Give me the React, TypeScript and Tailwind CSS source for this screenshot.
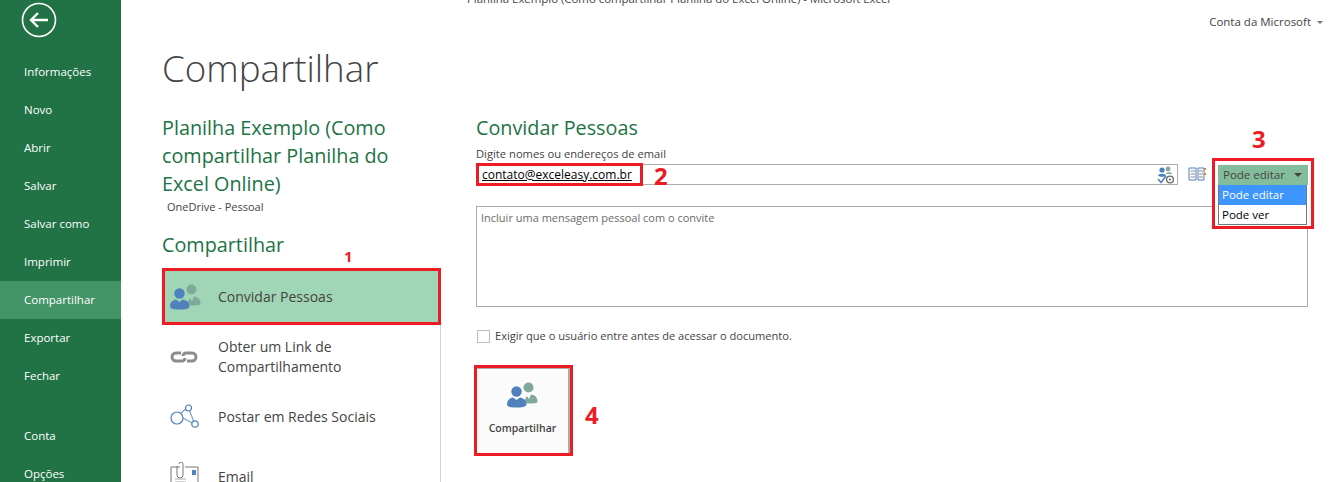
const font = { fontFamily: '"Open Sans", "Noto Sans", sans-serif' };

const navTop = [
  { id: "info", name: "Informações" },
  { id: "new", name: "Novo" },
  { id: "open", name: "Abrir" },
  { id: "save", name: "Salvar" },
  { id: "saveas", name: "Salvar como" },
  { id: "print", name: "Imprimir" },
  { id: "share", name: "Compartilhar", active: true },
  { id: "export", name: "Exportar" },
  { id: "close", name: "Fechar" },
];

const PeopleIcon = ({ className }: { className?: string }) => (
  <svg viewBox="0 0 31 26" className={className}>
    <circle cx="21.5" cy="5.5" r="5" fill="#7fa99b" />
    <path d="M16 21 L20 14 L22 17 L24 12.5 C28 13 30.5 15 30.5 20 C30.5 21 26 21.5 22 21.5 Z" fill="#7fa99b" />
    <circle cx="9.5" cy="9.5" r="5.2" fill="#4f81bd" />
    <path d="M0 22.5 C0 18 3 16 6 15.5 L9.5 18 L13 15.5 C16 16 19.5 18 19.5 22.5 C19.5 25 14 25.5 9.5 25.5 C5 25.5 0 25 0 22.5 Z" fill="#4f81bd" />
  </svg>
);

const Sidebar = () => (
  <aside className="flex h-[482px] w-[121px] shrink-0 flex-col bg-[#217346] text-white">
    <div className="pl-[21px] pt-[2px]">
      <svg viewBox="0 0 36 36" className="size-[36px]">
        <circle cx="18" cy="18" r="16.5" fill="none" stroke="#fff" strokeWidth="1.6" />
        <path d="M10 18 H27 M17 11 L10 18 L17 25" fill="none" stroke="#fff" strokeWidth="2.4" />
      </svg>
    </div>
    <nav className="mt-[15px] flex flex-col text-[11.5px]">
      {navTop.map((item) => (
        <div key={item.id} className={`flex h-[38px] items-center pl-[24px] ${item.active ? "bg-[#439467]" : ""}`}>
          {item.name}
        </div>
      ))}
    </nav>
    <div className="ml-[24px] mr-[26px] mt-[11px] h-px bg-[#4d9a70]" />
    <div className="mt-[11px] flex flex-col text-[11.5px]">
      <div className="flex h-[38px] items-center pl-[24px]">Conta</div>
      <div className="flex h-[38px] items-center pl-[24px]">Opções</div>
    </div>
  </aside>
);

const ShareOption = ({ icon, children, active, className }: { icon: React.ReactNode; children: React.ReactNode; active?: boolean; className?: string }) => (
  <div className={`flex items-center text-[14px] leading-[20px] text-[#444] ${active ? "bg-[#a0d5b5]" : ""} ${className ?? ""}`}>
    <div className="flex w-[56px] shrink-0 justify-start pl-[8px]">{icon}</div>
    <div>{children}</div>
  </div>
);

const LeftColumn = () => (
  <div className="flex w-[279px] shrink-0 flex-col">
    <h2 className="w-[270px] text-[19.8px] leading-[28px] text-[#217346]">
      Planilha Exemplo (Como compartilhar Planilha do Excel Online)
    </h2>
    <div className="ml-[5px] mt-[1px] text-[11px] leading-[15px] text-[#444]">OneDrive - Pessoal</div>
    <h2 className="mt-[17px] text-[19.8px] leading-[28px] text-[#217346]">Compartilhar</h2>
    <div className="relative mt-[9px] flex flex-col border-r border-[#d4d4d4]">
      <ShareOption active className="-mr-px mb-[2px] h-[57px] border-[3px] border-[#ed1c24]" icon={<PeopleIcon className="-ml-[3px] h-[26px] w-[31px]" />}>
        <span className="-ml-[3px]">Convidar Pessoas</span>
      </ShareOption>
      <ShareOption className="h-[60px]" icon={
        <svg viewBox="0 0 28 12" className="h-[12px] w-[28px]">
          <path d="M11 2 H6 A4 4 0 0 0 6 10 H12 A3 3 0 0 0 15 7 M17 10 H22 A4 4 0 0 0 22 2 H16 A3 3 0 0 0 13 5" fill="none" stroke="#8c8c8c" strokeWidth="3" />
        </svg>
      }>
        Obter um Link de<br />Compartilhamento
      </ShareOption>
      <ShareOption className="h-[60px]" icon={
        <svg viewBox="0 0 30 26" className="h-[26px] w-[30px]">
          <g fill="#fff" stroke="#4f81bd" strokeWidth="1.2">
            <path d="M11 9 L18 3 M13 14 L24 20 M18 3 L24 18" fill="none" stroke="#7f9fc6" />
            <circle cx="7" cy="14" r="6" />
            <circle cx="18.5" cy="4" r="3" />
            <circle cx="25" cy="20" r="3.2" />
          </g>
        </svg>
      }>
        Postar em Redes Sociais
      </ShareOption>
      <ShareOption className="h-[60px]" icon={
        <svg viewBox="0 0 30 30" className="h-[30px] w-[30px]">
          <path d="M10 5 H1 V26 H28 V5 H15" fill="#fff" stroke="#777" />
          <path d="M9 2 A2 2 0 0 1 13 2 V13 A2 2 0 0 1 7 13 V4" fill="none" stroke="#777" />
          <rect x="22" y="8" width="4" height="5" fill="#4f81bd" />
          <path d="M5 17 H16 M5 20 H16" stroke="#aaa" />
        </svg>
      }>
        Email
      </ShareOption>
    </div>
  </div>
);

const InviteColumn = () => (
  <div className="ml-[35px] flex w-[832px] flex-col text-[#444]">
    <h2 className="text-[19.8px] leading-[28px] text-[#217346]">Convidar Pessoas</h2>
    <label className="mt-[4px] text-[11.2px] leading-[16px]">Digite nomes ou endereços de email</label>
    <div className="mt-[2px] flex items-start">
      <div className="flex h-[21px] w-[702px] items-center justify-between border border-[#ababab] pr-[2px]">
        <span className="relative z-10 -ml-px flex h-[23px] w-[167px] items-center border-[3px] border-[#ed1c24] bg-white pl-[3px] text-[12px] text-black underline">
          contato@exceleasy.com.br
        </span>
        <svg viewBox="0 0 18 18" className="size-[18px]">
          <circle cx="5" cy="4" r="2.6" fill="#4f81bd" />
          <circle cx="11" cy="3" r="2.4" fill="#7fa99b" />
          <path d="M1 10 C1 7 9 7 9 10 L5 11 Z" fill="#4f81bd" />
          <path d="M9 8 C9 5.5 15 5.5 15 8 Z" fill="#7fa99b" />
          <path d="M1 13 L4 16.5 L9 10" fill="none" stroke="#4f81bd" strokeWidth="1.6" />
          <circle cx="13" cy="13.5" r="3.4" fill="none" stroke="#666" strokeWidth="1.3" />
          <circle cx="13" cy="13.5" r="1.1" fill="#666" />
        </svg>
      </div>
      <svg viewBox="0 0 18 14" className="ml-[10px] mt-[3px] h-[14px] w-[18px]">
        <path d="M1 1 H8 V13 H1 Z M10 1 H16 V13 H10 Z" fill="#fff" stroke="#4f81bd" />
        <path d="M2.5 4 H7 M2.5 7 H7 M2.5 10 H7 M11 4 H15 M11 7 H15 M11 10 H15" stroke="#8c8c8c" />
        <path d="M16 2 H18 M16 7 H18" stroke="#d08a3c" strokeWidth="2" />
      </svg>
    </div>
    <div className="relative z-0 mt-[21px] h-[101px] border border-[#ababab] pl-[4px] pt-[3px] text-[11px] leading-[16px] text-[#6a6a6a]">
      Incluir uma mensagem pessoal com o convite
    </div>
    <div className="mt-[21px] flex items-center gap-[5px] text-[11.1px] leading-[16px]">
      <span className="ml-[1px] size-[13px] border border-[#bdbdbd]" />
      Exigir que o usuário entre antes de acessar o documento.
    </div>
    <button className="-ml-[2px] mt-[21px] h-[91px] w-[99px] border-[3px] border-[#ed1c24] bg-white text-[10.5px] font-semibold text-[#444]">
      <div className="flex h-full flex-col items-center border-r-2 border-t border-r-[#ababab] border-t-[#ababab] bg-[#fbfbfb] pt-[13px]">
        <PeopleIcon className="h-[26px] w-[31px]" />
        <span className="mt-[13px]">Compartilhar</span>
      </div>
    </button>
  </div>
);

const PermissionMenu = () => (
  <div className="absolute left-[1212px] top-[158px] h-[71px] w-[102px] border-[3px] border-[#ed1c24] bg-white pl-[3px] pt-[4px] text-[11.5px]">
    <div className="flex h-[20px] w-[90px] items-center justify-between bg-[#84bd9b] pl-[5px] pr-[6px] text-[#444]">
      Pode editar
      <span className="h-0 w-0 border-x-[4px] border-t-[4px] border-x-transparent border-t-[#444]" />
    </div>
    <div className="w-[89px] border border-t-0 border-[#777] text-black">
      <div className="flex h-[20px] items-center bg-[#3d95ff] pl-[3px] text-white">Pode editar</div>
      <div className="flex h-[19px] items-center pl-[3px]">Pode ver</div>
    </div>
  </div>
);

const Marker = ({ n, className }: { n: string; className: string }) => (
  <span className={`absolute z-20 font-bold leading-none text-[#ed1c24] ${className}`}>{n}</span>
);

export default function App() {
  return (
    <div className="relative flex h-[482px] w-[1329px] overflow-hidden bg-white" style={font}>
      <Sidebar />
      <main className="flex min-w-0 flex-1 flex-col">
        <div className="relative h-[33px]">
          <div className="-mt-[9px] ml-[346px] whitespace-nowrap text-[11.4px] leading-[16px] text-[#444]">
            Planilha Exemplo (Como compartilhar Planilha do Excel Online) - Microsoft Excel
          </div>
          <div className="mt-[7px] flex items-center justify-end gap-[6px] pr-[6px] text-[11.5px] leading-[16px] text-[#444]">
            Conta da Microsoft
            <span className="h-0 w-0 border-x-[3px] border-t-[3px] border-x-transparent border-t-[#777]" />
          </div>
        </div>
        <h1 className="ml-[41px] mt-[14px] text-[36.7px] font-light leading-[48px] text-[#444]">Compartilhar</h1>
        <div className="ml-[41px] mt-[22px] flex">
          <LeftColumn />
          <InviteColumn />
        </div>
      </main>
      <PermissionMenu />
      <Marker n="1" className="left-[344px] top-[249px] text-[15px]" />
      <Marker n="2" className="left-[654px] top-[164px] text-[24px]" />
      <Marker n="3" className="left-[1252px] top-[127px] text-[24px]" />
      <Marker n="4" className="left-[585px] top-[403px] text-[24px]" />
    </div>
  );
}
